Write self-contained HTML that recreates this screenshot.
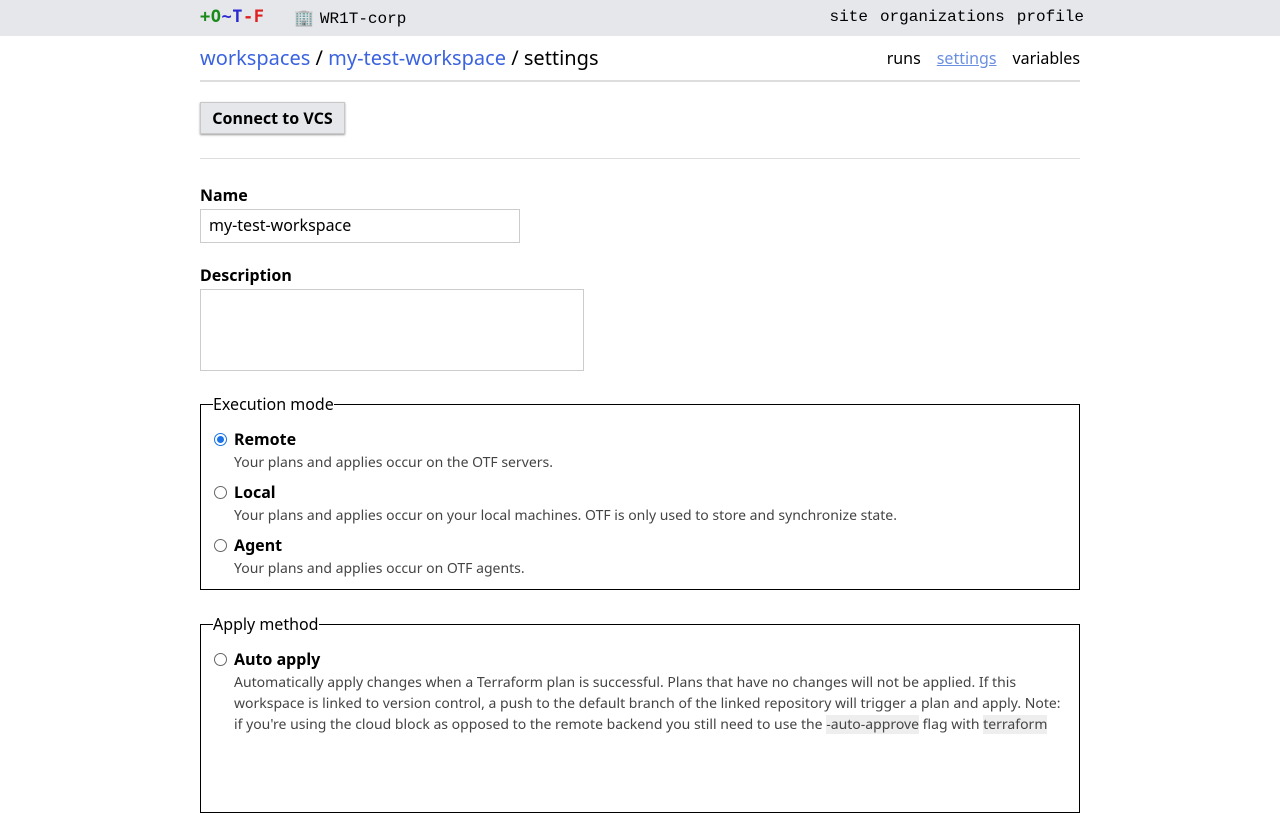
<!DOCTYPE html>
<html><head><style>
html,body{margin:0;height:720px;overflow:hidden}
body{font-family:"Noto Sans","DejaVu Sans",sans-serif;color:#000;background:#fff}
.hdr{height:36px;background:#e5e7eb;position:relative;font-family:"Liberation Mono",monospace;font-size:16px}
.logo{position:absolute;left:200px;top:7px;font-weight:bold;font-family:"DejaVu Sans Mono",monospace;font-size:17px;letter-spacing:0.5px}
.org{position:absolute;left:294px;top:8px}
.org b{font-weight:normal;margin-left:6px}
.nav{position:absolute;right:196px;top:8px}
.nav span{margin-left:12px}
.main{position:absolute;left:200px;width:880px;top:36px}
.crumb{position:absolute;top:8px;font-size:20px}
.crumb a{color:#3b63e0;text-decoration:none}
.sub{position:absolute;right:0;top:11px;font-size:16px}
.sub span{margin-left:16px}
hr{position:absolute;left:0;width:880px;border:0;margin:0}
.btn{position:absolute;top:66px;left:0;width:145px;height:32px;background:#e5e7eb;border:1px solid #c8c8c8;box-shadow:0 1px 2px #999;box-sizing:border-box;font-weight:bold;font-size:16px;text-align:center;line-height:30px}
.lbl{position:absolute;font-weight:bold;font-size:16px}
.in{position:absolute;border:1px solid #ccc;box-sizing:border-box;font-size:16px;padding-left:8px;line-height:31px}
fieldset{position:absolute;left:0;width:880px;box-sizing:border-box;border:1px solid #000;margin:0;padding:0}
legend{font-size:16px;margin-left:12px;padding:0}
.opt{position:absolute;left:12px}
.r{position:absolute;left:1px;top:5px;width:13px;height:13px;border:1px solid #666;border-radius:50%;box-sizing:border-box}
.r.on{border:1px solid #1a73e8}
.r.on:after{content:"";position:absolute;left:2px;top:2px;width:7px;height:7px;border-radius:50%;background:#1a73e8}
.t{position:absolute;left:21px;font-weight:bold;font-size:16px;white-space:nowrap}
.d{position:absolute;left:21px;top:24px;font-size:14px;color:#444;white-space:nowrap;line-height:21px}
</style></head><body>
<div class="hdr"><div class="logo"><span style="color:#1a8a1a">+O</span><span style="color:#2a2ad0">~T</span><span style="color:#e02020">-F</span></div>
<div class="org">🏢<b>WR1T-corp</b></div>
<div class="nav"><span>site</span><span>organizations</span><span>profile</span></div></div>
<div class="main">
<div class="crumb"><a>workspaces</a> / <a>my-test-workspace</a> / settings</div>
<div class="sub"><span>runs</span><span style="color:#6b8fe0;text-decoration:underline">settings</span><span>variables</span></div>
<hr style="top:44px;border-top:2px solid #ddd">
<div class="btn">Connect to VCS</div>
<hr style="top:122px;border-top:1px solid #ddd">
<div class="lbl" style="top:148px">Name</div>
<div class="in" style="top:173px;width:320px;height:34px">my-test-workspace</div>
<div class="lbl" style="top:228px">Description</div>
<div class="in" style="top:253px;width:384px;height:82px"></div>
<fieldset style="top:357px;height:197px"><legend>Execution mode</legend>
<div class="opt" style="top:13px"><div class="r on"></div><div class="t">Remote</div><div class="d">Your plans and applies occur on the OTF servers.</div></div>
<div class="opt" style="top:66px"><div class="r"></div><div class="t">Local</div><div class="d">Your plans and applies occur on your local machines. OTF is only used to store and synchronize state.</div></div>
<div class="opt" style="top:119px"><div class="r"></div><div class="t">Agent</div><div class="d">Your plans and applies occur on OTF agents.</div></div>
</fieldset>
<fieldset style="top:577px;height:200px"><legend>Apply method</legend>
<div class="opt" style="top:13px"><div class="r"></div><div class="t">Auto apply</div><div class="d">Automatically apply changes when a Terraform plan is successful. Plans that have no changes will not be applied. If this<br>workspace is linked to version control, a push to the default branch of the linked repository will trigger a plan and apply. Note:<br>if you're using the cloud block as opposed to the remote backend you still need to use the <span style="background:#eee">-auto-approve</span> flag with <span style="background:#eee">terraform</span></div></div>
</fieldset>
</div>
</body></html>
